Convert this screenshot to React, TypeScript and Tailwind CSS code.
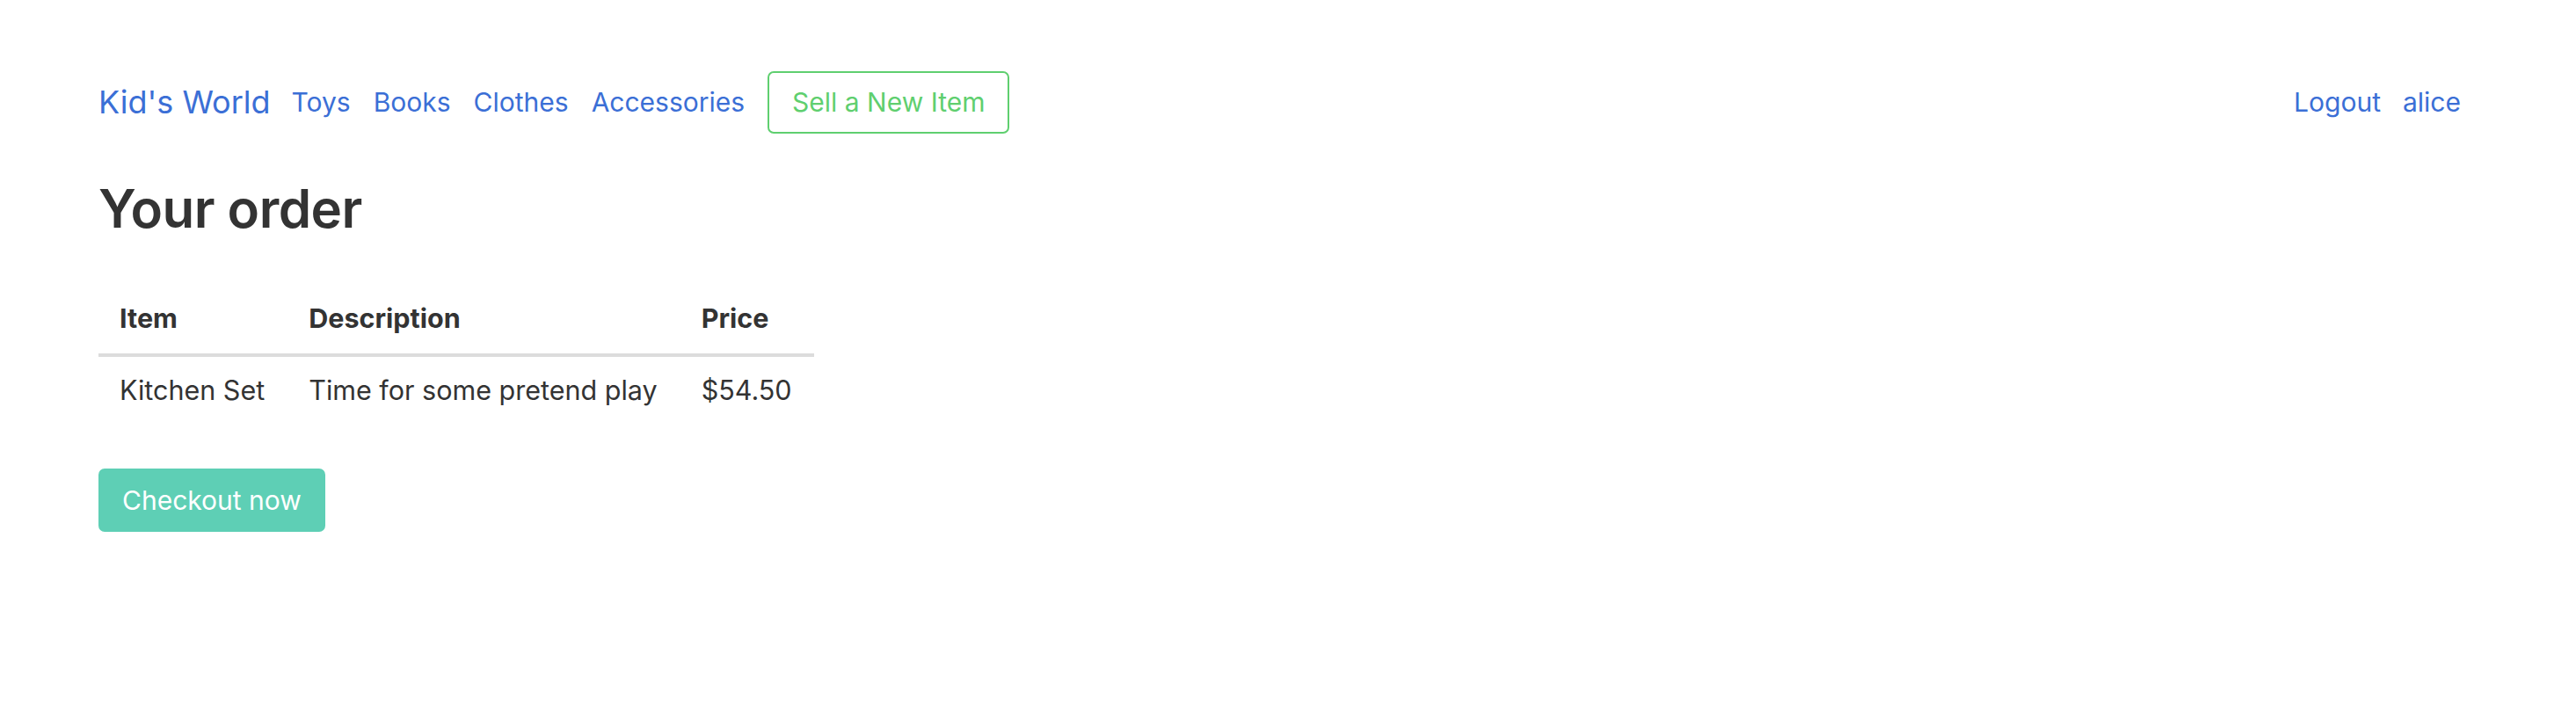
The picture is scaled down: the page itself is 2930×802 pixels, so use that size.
const LINK = 'text-[#3b6fd6]'

const NAV_LINKS = ['Toys', 'Books', 'Clothes', 'Accessories']

const ORDER = [
  { item: 'Kitchen Set', description: 'Time for some pretend play', price: '$54.50' },
]

function NavBar() {
  return (
    <nav className="flex items-center h-[70px]">
      <a className={`${LINK} text-[36px] leading-none mr-[24px]`}>Kid's World</a>
      <div className="flex items-center gap-[26px]">
        {NAV_LINKS.map((l) => (
          <a key={l} className={`${LINK} text-[30px] leading-none`}>
            {l}
          </a>
        ))}
        <button className="h-[71px] px-[26px] border-2 border-[#5fcf6f] rounded-[7px] text-[#5fcf6f] text-[30px] leading-none">
          Sell a New Item
        </button>
      </div>
      <div className="ml-auto flex items-center gap-[25px] pr-[19px]">
        <a className={`${LINK} text-[30px] leading-none`}>Logout</a>
        <a className={`${LINK} text-[30px] leading-none`}>alice</a>
      </div>
    </nav>
  )
}

export default function App() {
  return (
    <div className="min-h-[802px] bg-white px-[112px] pt-[81px] text-[#333333] font-['Inter','Liberation_Sans',sans-serif]">
      <NavBar />
      <h2 className="text-[60px] font-semibold leading-none mt-[56px] tracking-[-0.5px]">Your order</h2>
      <table className="mt-[72px] text-[30.5px] border-collapse">
        <thead>
          <tr className="border-b-4 border-[#dcdcdc]">
            <th className="text-left font-bold pl-[24px] pr-[26px] pb-[17px]">Item</th>
            <th className="text-left font-bold pl-[24px] pr-[26px] pb-[17px]">Description</th>
            <th className="text-left font-bold pl-[24px] pr-[25px] pb-[17px]">Price</th>
          </tr>
        </thead>
        <tbody>
          {ORDER.map((r) => (
            <tr key={r.item}>
              <td className="pl-[24px] pr-[26px] pt-[15px] pb-[20px]">{r.item}</td>
              <td className="pl-[24px] pr-[26px] pt-[15px] pb-[20px]">{r.description}</td>
              <td className="pl-[24px] pr-[25px] pt-[15px] pb-[20px]">{r.price}</td>
            </tr>
          ))}
        </tbody>
      </table>
      <button className="mt-[46px] h-[72px] px-[27px] rounded-[7px] bg-[#5ecfb5] text-white text-[30px] leading-none">
        Checkout now
      </button>
    </div>
  )
}
